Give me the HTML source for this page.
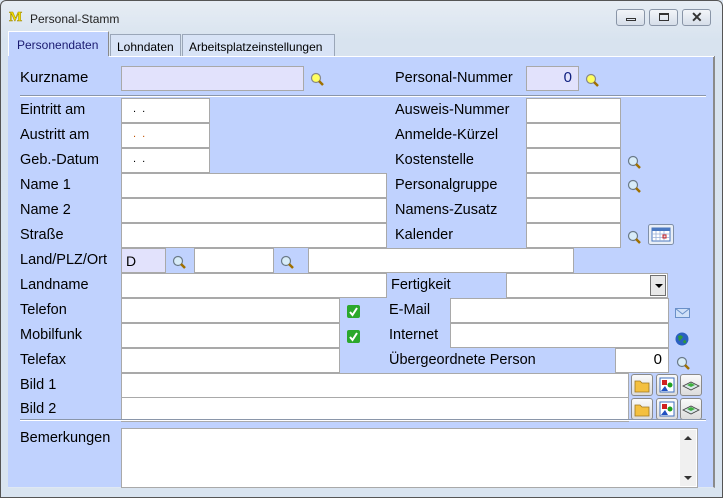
<!DOCTYPE html>
<html><head><meta charset="utf-8"><style>
*{margin:0;padding:0;box-sizing:border-box}
body{width:723px;height:498px;overflow:hidden;background:#dde7f2;font-family:"Liberation Sans",Arial,sans-serif;font-size:14px;color:#000;position:relative}
.win{position:absolute;left:0;top:0;width:723px;height:498px;border-radius:6px 6px 0 0;background:linear-gradient(#e7edf4,#d8e3ef 40px,#d9e4f0)}
.frame{position:absolute;left:0;top:0;width:723px;height:498px;border:1px solid #555;border-radius:6px 6px 0 0;pointer-events:none}
.a{position:absolute}
.lbl{position:absolute;font-size:14.5px;line-height:16px;white-space:nowrap}
.in{position:absolute;background:#fff;border:1px solid #a9a9a9;height:25px}
.lav{background:#e2e2fc}
.panel{position:absolute;left:8px;top:56px;width:707px;height:432px;background:#c0d2fe;border-right:2px solid #8a8a8a;border-bottom:1px solid #dfe8f3}
.tab{position:absolute;top:34px;height:23px;background:#d8e3f6;border:1px solid #9aa6b8;border-bottom:none;font-size:12px;padding:5px 0 0 8px;color:#000}
.wb{position:absolute;top:9px;width:29px;height:17px;border:1px solid #8995a7;border-radius:3px;background:linear-gradient(#f2f5f9,#d6dee9)}
.sep{position:absolute;left:20px;width:686px;height:2px;border-top:1px solid #8a96aa;border-bottom:1px solid #fff}
.ib{position:absolute;width:22px;height:22px;border:1px solid #8a8a8a;border-radius:3px;background:linear-gradient(#fafafa,#dcdcdc)}
.num{text-align:right;padding-right:6px;font-size:15px;line-height:22px;color:#102080}
</style></head><body>
<div class="win">
<svg class="a" style="left:9px;top:10px" width="18" height="12"><text x="0" y="11" font-family="Liberation Serif" font-weight="bold" font-size="14" fill="#f2e000" stroke="#a08800" stroke-width=".5">M</text></svg>
<div class="lbl" style="left:30px;top:11px;font-size:12px;color:#222">Personal-Stamm</div>
<div class="wb" style="left:616px"><div class="a" style="left:9px;top:8px;width:10px;height:3px;border:1px solid #333"></div></div>
<div class="wb" style="left:649px"><div class="a" style="left:9px;top:3px;width:10px;height:8px;border:1px solid #333;border-top-width:2px"></div></div>
<div class="wb" style="left:682px"><div class="a" style="left:8px;top:-1px;font-size:14px;color:#333;font-weight:bold">✕</div></div>

<div class="panel"></div>
<div class="tab" style="left:8px;top:31px;width:101px;height:26px;background:#c0d2fe;font-size:12px;color:#1a1a70;padding-top:6px;border-color:#fff #8a8a8a #fff #fff">Personendaten</div>
<div class="tab" style="left:110px;width:71px;padding-left:6px">Lohndaten</div>
<div class="tab" style="left:182px;width:153px;padding-left:6px">Arbeitsplatzeinstellungen</div>
<div class="a" style="left:8px;top:56px;width:706px;height:1px;background:#fff"></div>
<div class="a" style="left:8px;top:56px;width:101px;height:1px;background:#c0d2fe"></div>

<svg width="0" height="0" style="position:absolute"><defs>
<g id="my"><circle cx="6" cy="6" r="4.5" fill="#ffff60" stroke="#888" stroke-width="1.2"/><line x1="9" y1="9" x2="13" y2="13" stroke="#a07000" stroke-width="2.5"/></g>
<g id="mb"><circle cx="6" cy="6" r="4.5" fill="#d8ecf8" stroke="#6a7a88" stroke-width="1.2"/><line x1="9" y1="9" x2="13" y2="13" stroke="#a07000" stroke-width="2.5"/></g>
<g id="ck"><rect x="0" y="0" width="13" height="13" rx="2" fill="#2ba82b"/><path d="M3 7 L5.5 10 L10 3" stroke="#fff" stroke-width="2" fill="none"/></g>
</defs></svg>

<div class="lbl" style="left:20px;top:70px;font-size:15px">Kurzname</div>
<div class="in lav" style="left:121px;top:66px;width:183px;height:25px"></div>
<svg class="a" style="left:310px;top:72px" width="15" height="15"><use href="#my"/></svg>
<div class="lbl" style="left:395px;top:70px;font-size:14.5px">Personal-Nummer</div>
<div class="in lav num" style="left:526px;top:66px;width:53px">0</div>
<svg class="a" style="left:585px;top:73px" width="15" height="15"><use href="#my"/></svg>
<div class="sep" style="top:95px"></div>

<div class="lbl" style="left:20px;top:102px">Eintritt am</div>
<div class="in" style="left:121px;top:98px;width:89px"><span class="a" style="left:11px;top:4px;font-size:11px">.&nbsp;&nbsp;.</span></div>
<div class="lbl" style="left:20px;top:127px">Austritt am</div>
<div class="in" style="left:121px;top:123px;width:89px"><span class="a" style="left:11px;top:4px;font-size:11px;color:#c05000">.&nbsp;&nbsp;.</span></div>
<div class="lbl" style="left:20px;top:152px">Geb.-Datum</div>
<div class="in" style="left:121px;top:148px;width:89px"><span class="a" style="left:11px;top:4px;font-size:11px">.&nbsp;&nbsp;.</span></div>
<div class="lbl" style="left:20px;top:177px">Name 1</div>
<div class="in" style="left:121px;top:173px;width:266px"></div>
<div class="lbl" style="left:20px;top:202px">Name 2</div>
<div class="in" style="left:121px;top:198px;width:266px"></div>
<div class="lbl" style="left:20px;top:227px">Straße</div>
<div class="in" style="left:121px;top:223px;width:266px"></div>
<div class="lbl" style="left:20px;top:252px">Land/PLZ/Ort</div>
<div class="in lav" style="left:121px;top:248px;width:45px;padding:4px 0 0 4px;font-size:14px">D</div>
<svg class="a" style="left:172px;top:255px" width="15" height="15"><use href="#mb"/></svg>
<div class="in" style="left:194px;top:248px;width:80px"></div>
<svg class="a" style="left:280px;top:255px" width="15" height="15"><use href="#mb"/></svg>
<div class="in" style="left:308px;top:248px;width:266px"></div>
<div class="lbl" style="left:20px;top:277px">Landname</div>
<div class="in" style="left:121px;top:273px;width:266px"></div>
<div class="lbl" style="left:20px;top:302px">Telefon</div>
<div class="in" style="left:121px;top:298px;width:219px"></div>
<svg class="a" style="left:347px;top:305px" width="14" height="14"><use href="#ck"/></svg>
<div class="lbl" style="left:20px;top:327px">Mobilfunk</div>
<div class="in" style="left:121px;top:323px;width:219px"></div>
<svg class="a" style="left:347px;top:330px" width="14" height="14"><use href="#ck"/></svg>
<div class="lbl" style="left:20px;top:352px">Telefax</div>
<div class="in" style="left:121px;top:348px;width:219px"></div>

<div class="lbl" style="left:395px;top:102px">Ausweis-Nummer</div>
<div class="in" style="left:526px;top:98px;width:95px"></div>
<div class="lbl" style="left:395px;top:127px">Anmelde-Kürzel</div>
<div class="in" style="left:526px;top:123px;width:95px"></div>
<div class="lbl" style="left:395px;top:152px">Kostenstelle</div>
<div class="in" style="left:526px;top:148px;width:95px"></div>
<svg class="a" style="left:627px;top:155px" width="15" height="15"><use href="#mb"/></svg>
<div class="lbl" style="left:395px;top:177px">Personalgruppe</div>
<div class="in" style="left:526px;top:173px;width:95px"></div>
<svg class="a" style="left:627px;top:179px" width="15" height="15"><use href="#mb"/></svg>
<div class="lbl" style="left:395px;top:202px">Namens-Zusatz</div>
<div class="in" style="left:526px;top:198px;width:95px"></div>
<div class="lbl" style="left:395px;top:227px">Kalender</div>
<div class="in" style="left:526px;top:223px;width:95px"></div>
<svg class="a" style="left:627px;top:230px" width="15" height="15"><use href="#mb"/></svg>
<svg class="a" style="left:648px;top:224px" width="26" height="21"><rect x=".5" y=".5" width="25" height="20" rx="2" fill="#e8eef6" stroke="#8090a8"/><rect x="4" y="4" width="18" height="13" fill="#fff" stroke="#4a78c0"/><rect x="4" y="4" width="18" height="3" fill="#4a78c0"/><path d="M8 7v10M12 7v10M16 7v10M4 10h18M4 13.5h18" stroke="#9ab0d8" stroke-width=".8"/><rect x="15" y="11" width="3" height="3" fill="none" stroke="#d02020"/></svg>
<div class="lbl" style="left:391px;top:277px">Fertigkeit</div>
<div class="in" style="left:506px;top:273px;width:162px"><div class="a" style="right:1px;top:1px;width:16px;height:21px;border:1px solid #707070;background:#e8e8e8"><div class="a" style="left:4px;top:8px;border-left:4px solid transparent;border-right:4px solid transparent;border-top:4px solid #000"></div></div></div>
<div class="lbl" style="left:389px;top:302px">E-Mail</div>
<div class="in" style="left:450px;top:298px;width:219px"></div>
<svg class="a" style="left:675px;top:308px" width="15" height="10"><rect x=".5" y=".5" width="14" height="9" fill="#cfe0f8" stroke="#6a90c8"/><path d="M.5 .5 L7.5 6 L14.5 .5" stroke="#6a90c8" fill="none"/></svg>
<div class="lbl" style="left:389px;top:327px">Internet</div>
<div class="in" style="left:450px;top:323px;width:219px"></div>
<svg class="a" style="left:675px;top:332px" width="14" height="14"><circle cx="7" cy="7" r="6.5" fill="#2a60c0"/><path d="M3 4 Q6 2 8 5 Q6 8 4 9 Z M9 8 Q12 8 11 11 Q9 12 8 10Z" fill="#2c9a3a"/></svg>
<div class="lbl" style="left:389px;top:352px">Übergeordnete Person</div>
<div class="in num" style="left:615px;top:348px;width:54px;color:#000">0</div>
<svg class="a" style="left:676px;top:356px" width="15" height="15"><use href="#mb"/></svg>

<div class="lbl" style="left:20px;top:377px">Bild 1</div>
<div class="in" style="left:121px;top:373px;width:508px"></div>
<div class="lbl" style="left:20px;top:401px">Bild 2</div>
<div class="in" style="left:121px;top:397px;width:508px"></div>
<div class="ib" style="left:631px;top:374px"><svg width="20" height="20"><path d="M3 6h5l2 2h7v9H3z" fill="#f4c040" stroke="#a07820" stroke-width=".8"/></svg></div>
<div class="ib" style="left:656px;top:374px"><svg width="20" height="20"><rect x="3" y="3" width="14" height="14" fill="#fff" stroke="#4070c0"/><rect x="5" y="5" width="5" height="5" fill="#d02020"/><circle cx="13" cy="10" r="2.5" fill="#20a020"/><path d="M4 16l4-5 3 5z" fill="#2050c0"/></svg></div>
<div class="ib" style="left:680px;top:374px"><svg width="20" height="20"><path d="M2 11l8-4 8 4-8 4z" fill="#d8e8e8" stroke="#404040" stroke-width=".8"/><path d="M6 10l4-2 4 2-4 2z" fill="#40b040"/></svg></div>
<div class="ib" style="left:631px;top:398px"><svg width="20" height="20"><path d="M3 6h5l2 2h7v9H3z" fill="#f4c040" stroke="#a07820" stroke-width=".8"/></svg></div>
<div class="ib" style="left:656px;top:398px"><svg width="20" height="20"><rect x="3" y="3" width="14" height="14" fill="#fff" stroke="#4070c0"/><rect x="5" y="5" width="5" height="5" fill="#d02020"/><circle cx="13" cy="10" r="2.5" fill="#20a020"/><path d="M4 16l4-5 3 5z" fill="#2050c0"/></svg></div>
<div class="ib" style="left:680px;top:398px"><svg width="20" height="20"><path d="M2 11l8-4 8 4-8 4z" fill="#d8e8e8" stroke="#404040" stroke-width=".8"/><path d="M6 10l4-2 4 2-4 2z" fill="#40b040"/></svg></div>
<div class="sep" style="top:419px"></div>

<div class="lbl" style="left:20px;top:430px">Bemerkungen</div>
<div class="in" style="left:121px;top:428px;width:577px;height:60px"><div class="a" style="right:1px;top:1px;width:16px;height:56px;background:#f0f0f0"><div class="a" style="left:4px;top:6px;border-left:4px solid transparent;border-right:4px solid transparent;border-bottom:4px solid #333"></div><div class="a" style="left:4px;top:46px;border-left:4px solid transparent;border-right:4px solid transparent;border-top:4px solid #333"></div></div></div>
</div>
<div class="frame"></div>
</body></html>
